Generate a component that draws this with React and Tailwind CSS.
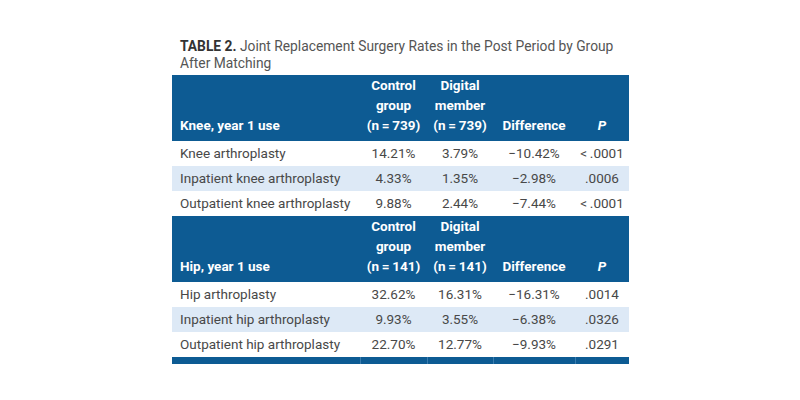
const knee = [
  { label: "Knee arthroplasty", control: "14.21%", digital: "3.79%", diff: "\u221210.42%", p: "<\u2009.0001" },
  { label: "Inpatient knee arthroplasty", control: "4.33%", digital: "1.35%", diff: "\u22122.98%", p: ".0006" },
  { label: "Outpatient knee arthroplasty", control: "9.88%", digital: "2.44%", diff: "\u22127.44%", p: "<\u2009.0001" },
];

const hip = [
  { label: "Hip arthroplasty", control: "32.62%", digital: "16.31%", diff: "\u221216.31%", p: ".0014" },
  { label: "Inpatient hip arthroplasty", control: "9.93%", digital: "3.55%", diff: "\u22126.38%", p: ".0326" },
  { label: "Outpatient hip arthroplasty", control: "22.70%", digital: "12.77%", diff: "\u22129.93%", p: ".0291" },
];

const HeaderRow = ({ title, n }) => (
  <tr className="bg-[#0d5b93] text-white font-bold h-[65px] align-bottom">
    <th className="text-left pl-2 pb-[6px] font-bold">{title}</th>
    <th className="pb-[6px] font-bold leading-[20px]">
      Control
      <br />
      group
      <br />
      (n{"\u2009=\u2009"}{n})
    </th>
    <th className="pb-[6px] font-bold leading-[20px]">
      Digital
      <br />
      member
      <br />
      (n{"\u2009=\u2009"}{n})
    </th>
    <th className="pb-[6px] font-bold">Difference</th>
    <th className="pb-[6px] font-bold italic">P</th>
  </tr>
);

const BodyRows = ({ rows }) =>
  rows.map((r, i) => (
    <tr key={r.label} className={`h-[25px] ${i === 1 ? "bg-[#dde9f6]" : "bg-white"}`}>
      <td className="text-left pl-2">{r.label}</td>
      <td className="text-center">{r.control}</td>
      <td className="text-center">{r.digital}</td>
      <td className="text-center">{r.diff}</td>
      <td className="text-center">{r.p}</td>
    </tr>
  ));

export default function App() {
  return (
    <div className="w-[800px] h-[400px] bg-white pt-[38px] pl-[172px]" style={{ fontFamily: "Roboto, 'Liberation Sans', sans-serif" }}>
      <div className="pl-2 text-[13.8px] leading-[17px] text-[#555]">
        <span className="font-bold text-[#333]">TABLE 2.</span> Joint Replacement Surgery Rates in the Post Period by Group
        <br />
        After Matching
      </div>
      <table className="mt-[3px] w-[457px] border-collapse text-[13.5px] text-[#484848] table-fixed">
        <colgroup>
          <col className="w-[188px]" />
          <col className="w-[67px]" />
          <col className="w-[66px]" />
          <col className="w-[82px]" />
          <col className="w-[54px]" />
        </colgroup>
        <tbody>
          <HeaderRow title="Knee, year 1 use" n="739" />
          <BodyRows rows={knee} />
          <HeaderRow title="Hip, year 1 use" n="141" />
          <BodyRows rows={hip} />
          <tr className="h-[7px] bg-[#0d5b93]">
            <td />
            <td className="border-l border-[#3a7cae]" />
            <td className="border-l border-[#3a7cae]" />
            <td className="border-l border-[#3a7cae]" />
            <td className="border-l border-[#3a7cae]" />
          </tr>
        </tbody>
      </table>
    </div>
  );
}
